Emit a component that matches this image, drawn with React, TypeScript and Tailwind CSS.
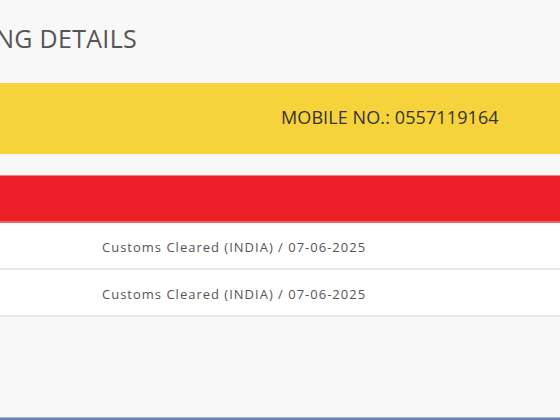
import React from "react";

export default function App() {
  const rows = [
    "Customs Cleared (INDIA) / 07-06-2025",
    "Customs Cleared (INDIA) / 07-06-2025",
  ];

  return (
    <div
      className="w-[560px] h-[420px] bg-[#f8f8f8] flex flex-col overflow-hidden"
      style={{ fontFamily: "'Open Sans', 'Liberation Sans', sans-serif" }}
    >
      {/* Title */}
      <div className="h-[83px] flex items-center pb-[6px]">
        <div className="w-[137px] overflow-hidden flex justify-end whitespace-nowrap">
          <h1 className="text-[25px] leading-none text-[#555] font-normal tracking-[0.3px]">
            TRACKING DETAILS
          </h1>
        </div>
      </div>

      {/* Mobile band */}
      <div className="h-[71px] bg-[#f7d33b] flex items-center pl-[281px] pb-[2px]">
        <span className="text-[18px] text-[#333] font-medium tracking-[0.1px]">
          MOBILE NO.: 0557119164
        </span>
      </div>

      <div className="h-[21px]" />

      {/* Table header */}
      <div className="h-[48px] bg-[#ed2029] border-t border-[#e88] border-b-2 border-b-[#f06068]" />

      {/* Rows */}
      <div className="bg-white">
        {rows.map((r, i) => (
          <div
            key={i}
            className="h-[47px] flex items-center pl-[102px] pt-[4px] border-b-2 border-[#e8e8e8]"
          >
            <span className="text-[13px] text-[#555] font-medium tracking-[1px]">{r}</span>
          </div>
        ))}
      </div>

      <div className="flex-1" />
      <div className="h-[3px] bg-[#6a80b8] border-t border-[#aab6d6]" />
    </div>
  );
}
